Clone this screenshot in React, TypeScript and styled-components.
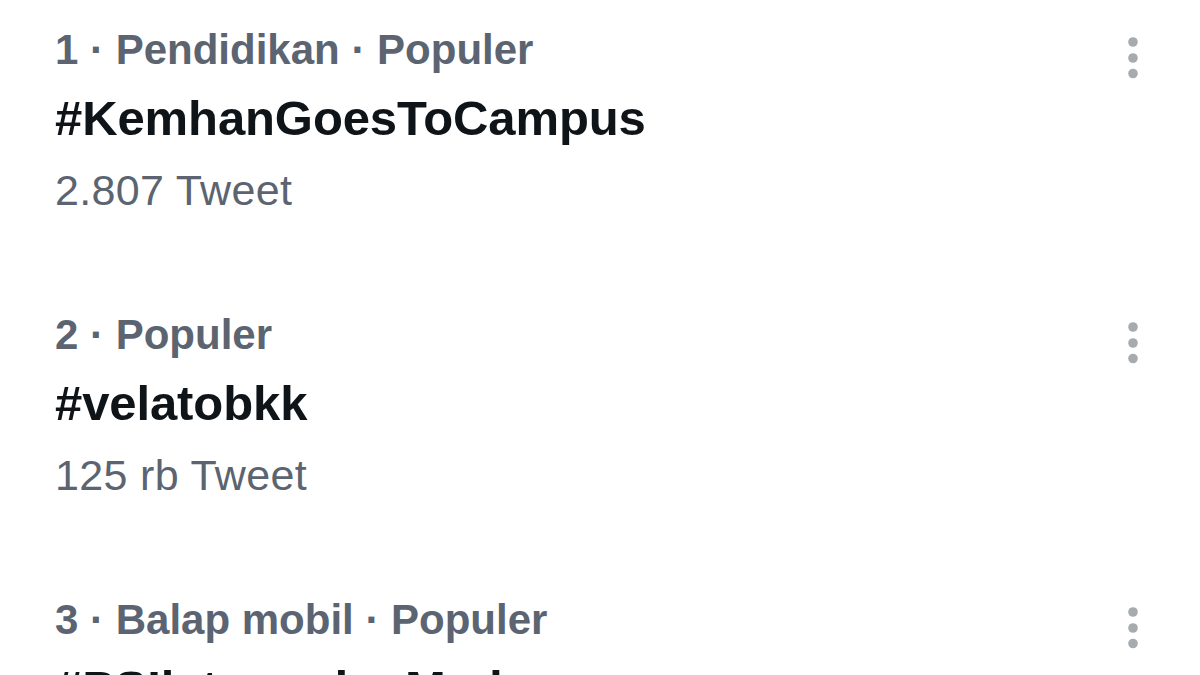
import React, { FC } from 'react';
import { styled, createGlobalStyle } from 'styled-components';

type Trend = {
  rank: number;
  category?: string;
  tag: string;
  count?: string;
};

const trends: Trend[] = [
  { rank: 1, category: 'Pendidikan', tag: '#KemhanGoesToCampus', count: '2.807 Tweet' },
  { rank: 2, tag: '#velatobkk', count: '125 rb Tweet' },
  { rank: 3, category: 'Balap mobil', tag: '#PSIlatomedanMadura' },
];

const GlobalStyle = createGlobalStyle`
  html, body {
    margin: 0;
    padding: 0;
    background: #ffffff;
  }
  body {
    font-family: 'Liberation Sans', Arial, sans-serif;
    overflow: hidden;
  }
`;

const Page = styled.main`
  width: 1200px;
  height: 675px;
  overflow: hidden;
  background: #ffffff;
`;

const List = styled.ul`
  list-style: none;
  margin: 0;
  padding: 16px 58px 0 55px;
  display: flex;
  flex-direction: column;
  gap: 73px;
`;

const Item = styled.li`
  display: flex;
  justify-content: space-between;
  align-items: flex-start;
`;

const Content = styled.div`
  display: flex;
  flex-direction: column;
`;

const Meta = styled.div`
  font-size: 42px;
  line-height: 68px;
  font-weight: 700;
  color: #5b6470;
  letter-spacing: 0;
  white-space: nowrap;
`;

const Tag = styled.div`
  font-size: 49px;
  line-height: 68px;
  font-weight: 700;
  color: #0f1419;
  letter-spacing: -0.1px;
  white-space: nowrap;
`;

const Count = styled.div`
  font-size: 43px;
  line-height: 76px;
  font-weight: 400;
  color: #5b6470;
  letter-spacing: 0.35px;
`;

const MoreButton = styled.button`
  border: none;
  background: transparent;
  padding: 0;
  margin-top: 18px;
  width: 18px;
  height: 50px;
  display: flex;
  align-items: center;
  justify-content: center;
  cursor: pointer;
`;

const MoreIcon: FC = () => (
  <svg width="12" height="46" viewBox="0 0 12 46">
    <circle cx="6" cy="6" r="4.8" fill="#a8abae" />
    <circle cx="6" cy="22" r="4.8" fill="#a8abae" />
    <circle cx="6" cy="37.5" r="4.8" fill="#a8abae" />
  </svg>
);

const App: FC = () => (
  <Page>
    <GlobalStyle />
    <List>
      {trends.map((t) => (
        <Item key={t.rank}>
          <Content>
            <Meta>
              {t.rank} · {t.category ? `${t.category} · ` : ''}Populer
            </Meta>
            <Tag>{t.tag}</Tag>
            {t.count && <Count>{t.count}</Count>}
          </Content>
          <MoreButton aria-label="Lainnya">
            <MoreIcon />
          </MoreButton>
        </Item>
      ))}
    </List>
  </Page>
);

export default App;
